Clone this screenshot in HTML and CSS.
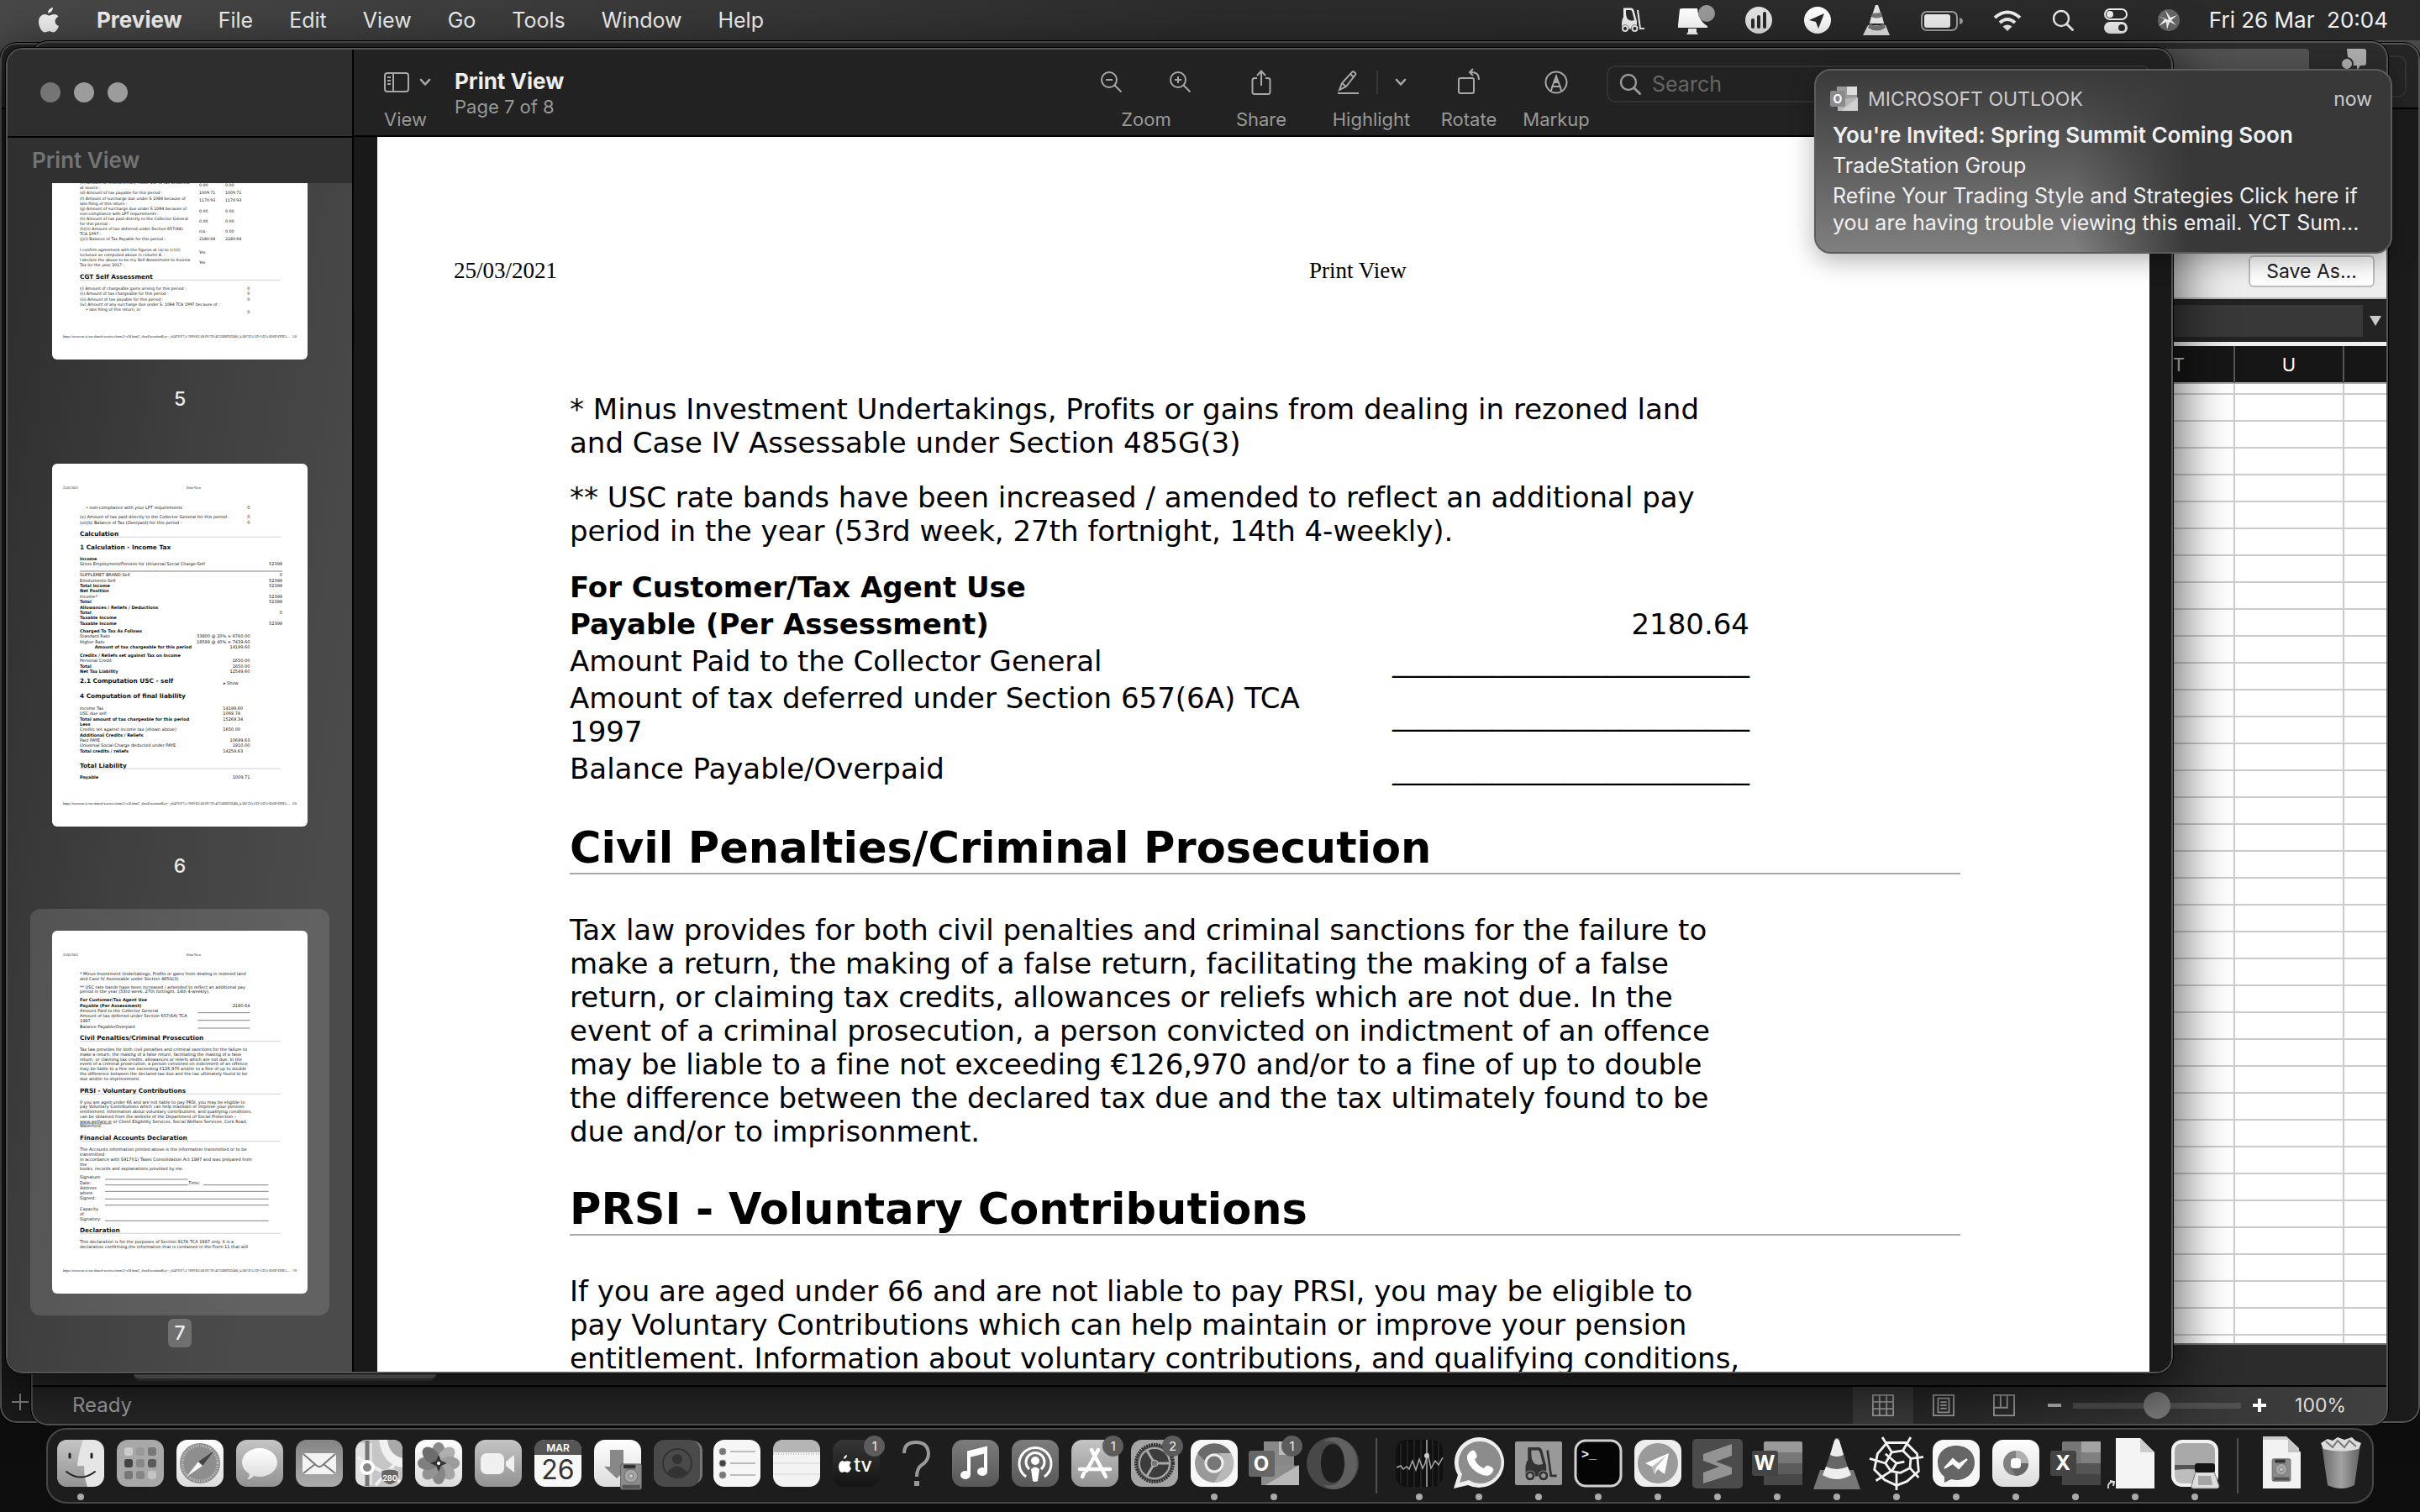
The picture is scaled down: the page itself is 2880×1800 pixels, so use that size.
FILE: index.html
```html
<!DOCTYPE html>
<html lang="en">
<head>
<meta charset="utf-8">
<title>Print View</title>
<link rel="stylesheet" href="styles.css">
</head>
<body>
<svg class="defs" aria-hidden="true">
  <defs>
    <linearGradient id="g-light" x1="0" y1="0" x2="0" y2="1"><stop offset="0" stop-color="#fff"/><stop offset="1" stop-color="#dcdcdc"/></linearGradient>
    <linearGradient id="g-soft" x1="0" y1="0" x2="0" y2="1"><stop offset="0" stop-color="#c4c4c4"/><stop offset="1" stop-color="#939393"/></linearGradient>
    <linearGradient id="g-mid" x1="0" y1="0" x2="0" y2="1"><stop offset="0" stop-color="#858585"/><stop offset="1" stop-color="#acacac"/></linearGradient>
    <linearGradient id="g-grey" x1="0" y1="0" x2="0" y2="1"><stop offset="0" stop-color="#7c7c7c"/><stop offset="1" stop-color="#585858"/></linearGradient>
    <linearGradient id="g-dark" x1="0" y1="0" x2="0" y2="1"><stop offset="0" stop-color="#363636"/><stop offset="1" stop-color="#141414"/></linearGradient>
    <linearGradient id="g-bin" x1="0" y1="0" x2="1" y2="0"><stop offset="0" stop-color="#6a6a6a"/><stop offset=".5" stop-color="#a2a2a2"/><stop offset="1" stop-color="#626262"/></linearGradient>
    <symbol id="forklift" viewBox="0 0 64 64">
      <path d="M12 3h18q5 0 7 6l7 26v18H8V38q0-8 4-13z" fill="currentColor"/>
      <path class="cut" d="M18 8h11q3 0 4 4l5 20q-12 3-16-3-5-6-4-21z"/>
      <path d="M46 8l6 44h10" fill="none" stroke="currentColor" stroke-width="4"/>
      <circle cx="16" cy="52" r="9" class="cut"/><circle cx="39" cy="52" r="9" class="cut"/>
      <circle cx="16" cy="52" r="6" class="cut" stroke="currentColor" stroke-width="4"/><circle cx="39" cy="52" r="6" class="cut" stroke="currentColor" stroke-width="4"/>
    </symbol>
    <symbol id="glass" viewBox="0 0 28 28">
      <circle cx="12" cy="12" r="9" fill="none" stroke="currentColor" stroke-width="2.4"/><path d="M18.500 18.500l7 7" stroke="currentColor" stroke-width="3" stroke-linecap="round"/>
    </symbol>
    <symbol id="chevron" viewBox="0 0 14 10"><path d="M2 2l5 5.500 5-5.500" fill="none" stroke="currentColor" stroke-width="2.600" stroke-linecap="round" stroke-linejoin="round"/></symbol>
    <symbol id="drive" viewBox="0 0 30 36">
      <rect x="1" y="1" width="28" height="34" rx="2" fill="#8b8b8b" stroke="#5a5a5a"/><rect x="5" y="2" width="16" height="5" fill="#333"/>
      <circle cx="15" cy="17" r="9" fill="#a5a5a5" stroke="#666"/><circle cx="15" cy="17" r="3" fill="#ccc" stroke="#666"/><path d="M3 29h24v5H3z" fill="#555"/>
    </symbol>
  </defs>
</svg>

<header class="menubar">
  <nav class="menus">
    <button class="menu apple" aria-label="Apple"><svg viewBox="0 0 26 32"><path d="M18 1c0 3-2.500 6.500-6 6.500C11.800 4.500 14.500 1.500 18 1zM24.500 11.500c-3 2-4.500 4-3.800 7 .4 2 2 3.600 4.300 4.500-1.200 3.500-3.800 7.500-6.500 7.500-2 0-2.700-1.200-5-1.200s-3.200 1.200-5 1.200C4.500 30.500 1 23.500 1 18c0-5.500 3.500-9 7.200-9 2.200 0 3.800 1.400 5.400 1.400 1.500 0 3.300-1.500 6-1.500 2 0 3.800 1 4.900 2.600z" fill="currentColor"/></svg></button>
    <button class="menu app-name">Preview</button>
    <button class="menu">File</button>
    <button class="menu">Edit</button>
    <button class="menu">View</button>
    <button class="menu">Go</button>
    <button class="menu">Tools</button>
    <button class="menu">Window</button>
    <button class="menu">Help</button>
  </nav>
  <div class="extras">
    <svg class="w38" viewBox="0 0 38 36"><use href="#forklift" x="2" y="2" width="34" height="32"/></svg>
    <svg class="w46" viewBox="0 0 46 36"><path d="M4 5q1-1 3-1h18c1 12 7 18 12 21v2H2V24z" fill="#fff"/><path d="M14 28h10v4l2 3H12l2-3z" fill="#fff"/><circle cx="36" cy="10" r="10" fill="#9a9a9a"/></svg>
    <svg class="w36" viewBox="0 0 36 36"><circle cx="18" cy="18" r="16" fill="#e4e4e4"/><path d="M11 18v8M18 14v12M25 10v16" stroke="#2a2a2a" stroke-width="4" stroke-linecap="round"/></svg>
    <svg class="w36" viewBox="0 0 36 36"><circle cx="18" cy="18" r="16" fill="#fff"/><path d="M26 10L8 18l8 2 3 8z" fill="#2a2a2a"/></svg>
    <svg class="w36" viewBox="0 0 36 36"><path d="M17 0h3l4 12H13z" fill="#e6e6e6"/><path d="M13 10l11-1 3 12H10z" fill="#777"/><path d="M12 14q6 3 13 0l2 8H10z" fill="#eee"/><path d="M8 24h21l5 12H2z" fill="#e8e8e8"/><path d="M10 22q8 5 17 0l2 5q-10 7-21 0z" fill="#777"/></svg>
    <svg class="w52" viewBox="0 0 52 36"><rect x="2" y="8" width="42" height="22" rx="6" fill="none" stroke="#a0a0a0" stroke-width="2"/><rect x="5" y="11" width="31" height="16" rx="3" fill="#f0f0f0"/><path d="M47 15q4 1 4 4t-4 4z" fill="#a0a0a0"/></svg>
    <svg class="w36" viewBox="0 0 36 36"><g fill="none" stroke="#f0f0f0" stroke-width="4"><path d="M3 15q15-13 30 0"/><path d="M9 21q9-8 18 0"/></g><path d="M12.500 25.500q5.500-4 11 0L18 31z" fill="#f0f0f0"/></svg>
    <svg class="w28 pale" viewBox="0 -4 28 36"><use href="#glass" width="28" height="28"/></svg>
    <svg class="w30" viewBox="0 0 30 36"><rect x="2" y="5" width="26" height="12" rx="6" fill="none" stroke="#f0f0f0" stroke-width="2"/><circle cx="8" cy="11" r="4" fill="#f0f0f0"/><rect x="1" y="20" width="28" height="14" rx="7" fill="#f0f0f0"/><circle cx="22" cy="27" r="4" fill="#2b2b2b"/></svg>
    <svg class="w28" viewBox="0 0 28 36"><circle cx="14" cy="18" r="13" fill="#666"/><path d="M14 18L10 6l6 9 8-3-7 6 6 6-8-4-3 9-1-9-9 5 7-8-7-4z" fill="#f4f4f4"/></svg>
    <time class="clock">Fri 26 Mar&nbsp; 20:04</time>
  </div>
</header>

<main class="desktop">
  <section class="window back-window" aria-label="Background window"><div class="back-bar"><div class="back-field"></div></div><span class="back-plus"></span></section>

  <section class="window sheet-window" aria-label="Spreadsheet">
    <div class="sheet-title"><span class="sheet-search">Search Sheet</span>
      <svg class="share-icon" viewBox="0 0 30 28"><path d="M7 0h20q3 0 3 3v14q0 3-3 3h-4l-4 6v-6H9z" fill="#aaa"/><circle cx="7" cy="18" r="7" fill="#aaa" stroke="#2b2b2b" stroke-width="2"/></svg></div>
    <div class="sheet-alert"><button class="save-as">Save As...</button></div>
    <div class="formula"><div class="formula-box"></div><span class="formula-arrow"></span></div>
    <div class="columns"><span>T</span><span class="current">U</span><span></span></div>
    <div class="cells"></div>
    <div class="tabs"><div class="tab"></div></div>
    <footer class="status">
      <span class="ready">Ready</span>
      <button class="view-btn on" aria-label="Normal view"><svg viewBox="0 0 28 28"><path d="M1 1h26v26H1zM9.500 1v26M18.500 1v26M1 9.500h26M1 18.500h26" /></svg></button>
      <button class="view-btn" aria-label="Page layout"><svg viewBox="0 0 28 28"><path d="M1 1h26v26H1zM7 5h14v18H7zM10 10h8M10 14h8M10 18h8"/></svg></button>
      <button class="view-btn" aria-label="Page break preview"><svg viewBox="0 0 28 28"><path d="M1 1h26v26H1zM1 17h17V1M9.500 1v16"/></svg></button>
      <button class="step minus" aria-label="Zoom out sheet"></button>
      <input class="zoom-range" type="range" min="0" max="100" value="50" aria-label="Zoom">
      <button class="step plus" aria-label="Zoom in sheet"></button>
      <span class="percent">100%</span>
    </footer>
  </section>

  <section class="window preview" aria-label="Print View">
    <aside class="sidebar">
      <div class="lights"><button class="light dim" aria-label="Close"></button><button class="light" aria-label="Minimise"></button><button class="light" aria-label="Full screen"></button></div>
      <h2 class="side-title">Print View</h2>
      <div class="thumbs">
        <a href="#p5" class="thumb cutoff"><span class="frame"><svg viewBox="0 666 912 630" class="sheet5">
          <text x="99" y="669">(c) Amount of refund/(credit) made due to tax deducted</text><text x="99" y="687">at source :</text><text x="525" y="677">0.00</text><text x="618" y="677">0.00</text>
          <text x="99" y="705">(d) Amount of tax payable for this period :</text><text x="525" y="705">1009.71</text><text x="618" y="705">1009.71</text>
          <text x="99" y="725">(f) Amount of surcharge due under S 1084 because of</text><text x="99" y="743">late filing of this return :</text><text x="525" y="733">1170.93</text><text x="618" y="733">1170.93</text>
          <text x="99" y="761">(g) Amount of surcharge due under S 1084 because of</text><text x="99" y="779">non-compliance with LPT requirements :</text><text x="525" y="770">0.00</text><text x="618" y="770">0.00</text>
          <text x="99" y="797">(h) Amount of tax paid directly to the Collector General</text><text x="99" y="815">for this period :</text><text x="525" y="806">0.00</text><text x="618" y="806">0.00</text>
          <text x="99" y="834">(h)(ii) Amount of tax deferred under Section 657(6A)</text><text x="99" y="852">TCA 1997 :</text><text x="525" y="842">n/a</text><text x="618" y="842">0.00</text>
          <text x="99" y="871">(j)(i) Balance of Tax Payable for this period :</text><text x="525" y="871">2180.64</text><text x="618" y="871">2180.64</text>
          <text x="99" y="909">I confirm agreement with the figures at (a) to (c)(ii)</text><text x="99" y="926">inclusive as computed above in column A. :</text><text x="525" y="918">Yes</text>
          <text x="99" y="945">I declare the above to be my Self Assessment to Income</text><text x="99" y="964">Tax for the year 2017 :</text><text x="525" y="954">Yes</text>
          <text class="h" x="99" y="1008">CGT Self Assessment</text><path d="M99 1012h717"/>
          <text x="99" y="1046">(i) Amount of chargeable gains arising for this period :</text><text x="697" y="1046">0</text>
          <text x="99" y="1065">(ii) Amount of tax chargeable for this period :</text><text x="697" y="1065">0</text>
          <text x="99" y="1085">(iii) Amount of tax payable for this period :</text><text x="697" y="1085">0</text>
          <text x="99" y="1105">(iv) Amount of any surcharge due under S. 1084 TCA 1997 because of :</text>
          <text x="120" y="1123">• late filing of this return, or</text><text x="697" y="1130">0</text>
          <text class="s" x="39" y="1217">https://www.ros.ie/ros-shared-services/form11-v38.html?_flowExecutionKey=_c64F91F7A-7899-B2AB-DC7D-4F25BBFED480_kABCDA11D-11DA-B56D-DDE5…</text><text class="s" x="858" y="1217">5/8</text>
        </svg></span><span class="num">5</span></a>
        <a href="#p6" class="thumb"><span class="frame"><svg viewBox="0 0 912 1296">
          <text class="s" x="39" y="89">25/03/2021</text><text class="s" x="480" y="89">Print View</text>
          <text x="120" y="161">• non-compliance with your LPT requirements</text><text x="697" y="161">0</text>
          <text x="99" y="196">(v) Amount of tax paid directly to the Collector General for this period :</text><text x="697" y="196">0</text>
          <text x="99" y="216">(vi)(b) Balance of Tax (Overpaid) for this period :</text><text x="697" y="216">0</text>
          <text class="h" x="99" y="259">Calculation</text><path d="M99 262h717"/>
          <text class="h" x="99" y="306">1 Calculation - Income Tax</text>
          <text class="b" x="99" y="344">Income</text><text x="99" y="364">Gross Employment/Pension for Universal Social Charge-Self</text><text class="e" x="822" y="364">52399</text><path class="k" d="M99 384h723"/>
          <text x="99" y="403">SUPPLEMET BRAND-Self</text><text class="e" x="822" y="403">0</text>
          <text x="99" y="423">Emoluments-Self</text><text class="e" x="822" y="423">52399</text>
          <text class="b" x="99" y="440">Total Income</text><text class="e" x="822" y="440">52399</text>
          <text class="b" x="99" y="460">Net Position</text><text x="99" y="479">Income*</text><text class="e" x="822" y="479">52399</text>
          <text class="b" x="99" y="499">Total</text><text class="e" x="822" y="499">52399</text>
          <text class="b" x="99" y="518">Allowances / Reliefs / Deductions</text><text class="b" x="99" y="536">Total</text><text class="e" x="822" y="536">0</text>
          <text class="b" x="99" y="556">Taxable Income</text><text class="b" x="99" y="576">Taxable Income</text><text class="e" x="822" y="576">52399</text>
          <text class="b" x="99" y="604">Charged To Tax As Follows</text>
          <text x="99" y="622">Standard Rate</text><text class="e" x="706" y="622">33800 @ 20% = 6760.00</text>
          <text x="99" y="642">Higher Rate</text><text class="e" x="706" y="642">18599 @ 40% = 7439.60</text>
          <text class="b" x="152" y="660">Amount of tax chargeable for this period</text><text class="e" x="706" y="660">14199.60</text>
          <text class="b" x="99" y="690">Credits / Reliefs set against Tax on Income</text>
          <text x="99" y="709">Personal Credit</text><text class="e" x="706" y="709">1650.00</text>
          <text class="b" x="99" y="729">Total</text><text class="e" x="706" y="729">1650.00</text>
          <text class="b" x="99" y="747">Net Tax Liability</text><text class="e" x="706" y="747">12549.60</text>
          <text class="h" x="99" y="782">2.1 Computation USC - self</text><text x="612" y="788">▸ Show</text>
          <text class="h" x="99" y="838">4 Computation of final liability</text>
          <text x="99" y="879">Income Tax</text><text x="610" y="879">14199.60</text>
          <text x="99" y="897">USC due self</text><text x="610" y="897">1069.74</text>
          <text class="b" x="99" y="917">Total amount of tax chargeable for this period</text><text x="610" y="917">15269.34</text>
          <text class="b" x="99" y="935">Less</text><text x="99" y="955">Credits set against income tax (shown above)</text><text x="610" y="955">1650.00</text>
          <text class="b" x="99" y="974">Additional Credits / Reliefs</text>
          <text x="99" y="992">Paid PAYE</text><text class="e" x="706" y="992">10699.63</text>
          <text x="99" y="1012">Universal Social Charge deducted under PAYE</text><text class="e" x="706" y="1012">1910.00</text>
          <text class="b" x="99" y="1032">Total credits / reliefs</text><text x="610" y="1032">14259.63</text>
          <text class="h" x="99" y="1086">Total Liability</text><path d="M99 1089h717"/>
          <text class="b" x="99" y="1125">Payable</text><text class="e" x="706" y="1125">1009.71</text>
          <text class="s" x="39" y="1217">https://www.ros.ie/ros-shared-services/form11-v38.html?_flowExecutionKey=_c64F91F7A-7899-B2AB-DC7D-4F25BBFED480_kABCDA11D-11DA-B56D-DDE5…</text><text class="s" x="858" y="1217">6/8</text>
        </svg></span><span class="num">6</span></a>
        <a href="#p7" class="thumb selected"><span class="frame"><svg viewBox="0 0 912 1296">
          <text class="s" x="39" y="89">25/03/2021</text><text class="s" x="480" y="89">Print View</text>
          <text x="99" y="160">* Minus Investment Undertakings, Profits or gains from dealing in rezoned land</text><text x="99" y="178">and Case IV Assessable under Section 485G(3)</text>
          <text x="99" y="206">** USC rate bands have been increased / amended to reflect an additional pay</text><text x="99" y="223">period in the year (53rd week, 27th fortnight, 14th 4-weekly).</text>
          <text class="b" x="99" y="252">For Customer/Tax Agent Use</text><text class="b" x="99" y="272">Payable (Per Assessment)</text><text class="e" x="706" y="272">2180.64</text>
          <text x="99" y="291">Amount Paid to the Collector General</text><text x="99" y="309">Amount of tax deferred under Section 657(6A) TCA</text><text x="99" y="327">1997</text><text x="99" y="347">Balance Payable/Overpaid</text>
          <path class="k" d="M520 293h186M520 320h186M520 348h186"/>
          <text class="h" x="99" y="390">Civil Penalties/Criminal Prosecution</text><path d="M99 395h717"/>
          <text x="99" y="429">Tax law provides for both civil penalties and criminal sanctions for the failure to</text><text x="99" y="447">make a return, the making of a false return, facilitating the making of a false</text><text x="99" y="464">return, or claiming tax credits, allowances or reliefs which are not due. In the</text><text x="99" y="481">event of a criminal prosecution, a person convicted on indictment of an offence</text><text x="99" y="498">may be liable to a fine not exceeding €126,970 and/or to a fine of up to double</text><text x="99" y="516">the difference between the declared tax due and the tax ultimately found to be</text><text x="99" y="534">due and/or to imprisonment.</text>
          <text class="h" x="99" y="578">PRSI - Voluntary Contributions</text><path d="M99 583h717"/>
          <text x="99" y="617">If you are aged under 66 and are not liable to pay PRSI, you may be eligible to</text><text x="99" y="634">pay Voluntary Contributions which can help maintain or improve your pension</text><text x="99" y="651">entitlement. Information about voluntary contributions, and qualifying conditions,</text><text x="99" y="669">can be obtained from the website of the Department of Social Protection –</text><text x="99" y="686"><tspan text-decoration="underline">www.welfare.ie</tspan> or Client Eligibility Services, Social Welfare Services, Cork Road,</text><text x="99" y="703">Waterford.</text>
          <text class="h" x="99" y="747">Financial Accounts Declaration</text><path d="M99 752h717"/>
          <text x="99" y="787">The Accounts information printed above is the information transmitted or to be</text><text x="99" y="805">transmitted</text><text x="99" y="822">in accordance with S917f(1) Taxes Consolidation Act 1997 and was prepared from</text><text x="99" y="839">the</text><text x="99" y="856">books, records and explanations provided by me.</text>
          <text x="99" y="885">Signature:</text><text x="99" y="905">Date:</text><text x="487" y="905">Time:</text><text x="99" y="924">Address</text><text x="99" y="943">where</text><text x="99" y="960">Signed:</text><text x="99" y="999">Capacity</text><text x="99" y="1016">of</text><text x="99" y="1034">Signatory:</text>
          <path class="k" d="M189 888h296M189 908h296M540 908h232M189 931h584M189 958h584M189 980h584M189 1036h584"/>
          <text class="h" x="99" y="1077">Declaration</text><path d="M99 1081h717"/>
          <text x="99" y="1117">This declaration is for the purposes of Section 917K TCA 1997 only. It is a</text><text x="99" y="1134">declaration confirming the information that is contained in the Form 11 that will</text>
          <text class="s" x="39" y="1217">https://www.ros.ie/ros-shared-services/form11-v38.html?_flowExecutionKey=_c64F91F7A-7899-B2AB-DC7D-4F25BBFED480_kABCDA11D-11DA-B56D-DDE5…</text><text class="s" x="858" y="1217">7/8</text>
        </svg></span><span class="num">7</span></a>
      </div>
    </aside>

    <div class="content">
      <div class="toolbar">
        <button class="tool view-tool"><span class="glyphs"><svg class="w30" viewBox="0 0 30 24"><rect x="1" y="1" width="28" height="22" rx="3"/><path d="M11 1v22M4 6h4M4 10h4M4 14h4"/></svg><svg class="w14" viewBox="0 0 14 10"><use href="#chevron"/></svg></span>View</button>
        <div class="doc-title"><h1>Print View</h1><p>Page 7 of 8</p></div>
        <div class="tool zoom-tool"><span class="glyphs"><button aria-label="Zoom out"><svg class="w28" viewBox="0 0 28 28"><circle cx="11" cy="11" r="9"/><path d="M7 11h8M17.500 17.500l8 8"/></svg></button><button aria-label="Zoom in"><svg class="w28" viewBox="0 0 28 28"><circle cx="11" cy="11" r="9"/><path d="M7 11h8M11 7v8M17.500 17.500l8 8"/></svg></button></span>Zoom</div>
        <button class="tool share-tool"><span class="glyphs"><svg class="w28" viewBox="0 0 28 32"><path d="M9 11H6q-2.500 0-2.500 2.500v14Q3.500 30 6 30h16q2.500 0 2.500-2.500v-14Q24.500 11 22 11h-3M14 20V3M9 8l5-5.500L19 8"/></svg></span>Share</button>
        <div class="tool mark-tool"><span class="glyphs"><button aria-label="Highlight text"><svg class="w28" viewBox="0 0 28 32"><path d="M2 29h25M4 25l3-8L19 4q1-1.500 3 0t1 3L12 21zM17 6l4 4M7 17l5 4"/></svg></button><i></i><button aria-label="Highlight colour"><svg class="w14" viewBox="0 0 14 10"><use href="#chevron"/></svg></button></span>Highlight</div>
        <button class="tool rotate-tool"><span class="glyphs"><svg class="w28" viewBox="0 0 28 32"><rect x="2" y="11" width="18" height="18" rx="2"/><path d="M16 4q10-1 10 9M19 0l-4 4 4 4"/></svg></span>Rotate</button>
        <button class="tool markup-tool"><span class="glyphs"><svg class="w28" viewBox="0 0 28 28"><circle cx="14" cy="14" r="12.500"/><path d="M8 24l1-4 5-13 5 13 1 4M9.500 19h9"/><path d="M14 7l2.500 7h-5z" fill="currentColor"/></svg></span>Markup</button>
        <label class="search"><svg class="w28" viewBox="0 0 28 28"><use href="#glass"/></svg><input type="search" placeholder="Search" aria-label="Search"></label>
      </div>
      <div class="viewer">
        <article class="page">
          <div class="page-head"><span>25/03/2021</span><span>Print View</span></div>
          <p>* Minus Investment Undertakings, Profits or gains from dealing in rezoned land<br>and Case IV Assessable under Section 485G(3)</p>
          <p>** USC rate bands have been increased / amended to reflect an additional pay<br>period in the year (53rd week, 27th fortnight, 14th 4-weekly).</p>
          <table>
            <tr><th>For Customer/Tax Agent Use</th><td></td></tr>
            <tr><th>Payable (Per Assessment)</th><td>2180.64</td></tr>
            <tr><td>Amount Paid to the Collector General</td><td>_________________________</td></tr>
            <tr><td>Amount of tax deferred under Section 657(6A) TCA<br>1997</td><td>_________________________</td></tr>
            <tr><td>Balance Payable/Overpaid</td><td>_________________________</td></tr>
          </table>
          <h3>Civil Penalties/Criminal Prosecution</h3>
          <p>Tax law provides for both civil penalties and criminal sanctions for the failure to<br>make a return, the making of a false return, facilitating the making of a false<br>return, or claiming tax credits, allowances or reliefs which are not due. In the<br>event of a criminal prosecution, a person convicted on indictment of an offence<br>may be liable to a fine not exceeding €126,970 and/or to a fine of up to double<br>the difference between the declared tax due and the tax ultimately found to be<br>due and/or to imprisonment.</p>
          <h3>PRSI - Voluntary Contributions</h3>
          <p>If you are aged under 66 and are not liable to pay PRSI, you may be eligible to<br>pay Voluntary Contributions which can help maintain or improve your pension<br>entitlement. Information about voluntary contributions, and qualifying conditions,</p>
        </article>
      </div>
    </div>
  </section>
</main>

<aside class="notice">
  <div class="notice-head">
    <svg viewBox="0 0 36 32"><path d="M9 1h24v18H9z" fill="#999"/><path d="M21 1h12v10H21z" fill="#ddd"/><path d="M10 16l24-2v16H10z" fill="#b5b5b5"/><path d="M34 14v16H14z" fill="#cfcfcf"/><rect x="1" y="6" width="18" height="19" rx="2" fill="#8a8a8a"/><text x="10" y="21" class="tile-letter small">O</text></svg>
    <span>MICROSOFT OUTLOOK</span><time>now</time>
  </div>
  <strong>You're Invited: Spring Summit Coming Soon</strong>
  <p class="from">TradeStation Group</p>
  <p>Refine Your Trading Style and Strategies Click here if<br>you are having trouble viewing this email. YCT Sum...</p>
</aside>

<nav class="dock" aria-label="Dock">
  <button class="app run" aria-label="Finder"><svg viewBox="0 0 64 64"><rect x="4" y="4" width="56" height="56" rx="13" fill="#e6e6e6"/><path d="M17 4h18q-6 16-7 31h8q0 14 4 25H17Q4 60 4 47V17Q4 4 17 4z" fill="url(#g-soft)"/><path d="M19 21v4M45 21v4" stroke="#222" stroke-width="3" stroke-linecap="round"/><path d="M15 42q17 13 34 0" fill="none" stroke="#222" stroke-width="2" stroke-linecap="round"/></svg></button>
  <button class="app" aria-label="Launchpad"><svg viewBox="0 0 64 64"><rect x="4" y="4" width="56" height="56" rx="13" fill="#a8a8a8"/><g><rect x="13" y="13" width="10" height="10" rx="3" fill="#ccc"/><rect x="27" y="13" width="10" height="10" rx="3" fill="#999"/><rect x="41" y="13" width="10" height="10" rx="3" fill="#777"/><rect x="13" y="27" width="10" height="10" rx="3" fill="#444"/><rect x="27" y="27" width="10" height="10" rx="3" fill="#888"/><rect x="41" y="27" width="10" height="10" rx="3" fill="#5a5a5a"/><rect x="13" y="41" width="10" height="10" rx="3" fill="#777"/><rect x="27" y="41" width="10" height="10" rx="3" fill="#858585"/><rect x="41" y="41" width="10" height="10" rx="3" fill="#c4c4c4"/></g></svg></button>
  <button class="app" aria-label="Safari"><svg viewBox="0 0 64 64"><rect x="4" y="4" width="56" height="56" rx="13" fill="url(#g-light)"/><circle cx="32" cy="32" r="24" fill="#8e8e8e"/><circle cx="32" cy="32" r="21" fill="none" stroke="#ccc" stroke-width="3" stroke-dasharray="1 2"/><path d="M49 17L35 35l-5-5z" fill="#444"/><path d="M16 48l14-18 5 5z" fill="#f5f5f5"/></svg></button>
  <button class="app" aria-label="Messages"><svg viewBox="0 0 64 64"><rect x="4" y="4" width="56" height="56" rx="13" fill="url(#g-soft)"/><path d="M32 14c12 0 21 8 21 17s-9 17-21 17q-4 0-7-1-3 4-8 4 3-3 3-6-9-6-9-14c0-9 9-17 21-17z" fill="url(#g-light)"/></svg></button>
  <button class="app" aria-label="Mail"><svg viewBox="0 0 64 64"><rect x="4" y="4" width="56" height="56" rx="13" fill="url(#g-mid)"/><rect x="12" y="20" width="40" height="25" rx="3" fill="#f3f3f3"/><path d="M13 21l16 14q3 2 6 0l16-14M13 44l14-11M51 44L37 33" fill="none" stroke="#777" stroke-width="2"/></svg></button>
  <button class="app" aria-label="Maps"><svg viewBox="0 0 64 64"><rect x="4" y="4" width="56" height="56" rx="13" fill="#c6c6c6"/><path d="M32 4h15q13 0 13 13v20Q36 34 32 4z" fill="#f1f1f1"/><path d="M42 4h6q12 0 12 12v10Q44 22 42 4z" fill="#a9a9a9"/><path d="M8 8h16v50h-8Q4 60 4 47V16z" fill="#e2e2e2"/><path d="M18 5v54" stroke="#777" stroke-width="5"/><path d="M6 25l51 29M28 58L50 34" stroke="#eee" stroke-width="4"/><circle cx="18" cy="37" r="7" fill="#888" stroke="#fff" stroke-width="4"/><path d="M35 41q10-4 20 0 3 14-10 17-13-3-10-17z" fill="#666" stroke="#ddd"/><text x="45" y="53" class="shield">280</text></svg></button>
  <button class="app" aria-label="Photos"><svg viewBox="0 0 64 64"><rect x="4" y="4" width="56" height="56" rx="13" fill="url(#g-light)"/><g opacity=".85"><ellipse cx="32" cy="19" rx="8" ry="12" fill="#777"/><ellipse cx="32" cy="19" rx="8" ry="12" fill="#a3a3a3" transform="rotate(45 32 32)"/><ellipse cx="32" cy="19" rx="8" ry="12" fill="#8e8e8e" transform="rotate(90 32 32)"/><ellipse cx="32" cy="19" rx="8" ry="12" fill="#999" transform="rotate(135 32 32)"/><ellipse cx="32" cy="19" rx="8" ry="12" fill="#777" transform="rotate(180 32 32)"/><ellipse cx="32" cy="19" rx="8" ry="12" fill="#858585" transform="rotate(225 32 32)"/><ellipse cx="32" cy="19" rx="8" ry="12" fill="#6d6d6d" transform="rotate(270 32 32)"/><ellipse cx="32" cy="19" rx="8" ry="12" fill="#555" transform="rotate(315 32 32)"/></g><path d="M32 22l3 7 7 3-7 3-3 7-3-7-7-3 7-3z" fill="#333"/><circle cx="32" cy="32" r="2" fill="#fff"/></svg></button>
  <button class="app" aria-label="FaceTime"><svg viewBox="0 0 64 64"><rect x="4" y="4" width="56" height="56" rx="13" fill="url(#g-soft)"/><rect x="11" y="20" width="28" height="25" rx="7" fill="#f0f0f0"/><path d="M41 30l10-8v21l-10-8z" fill="#f0f0f0"/></svg></button>
  <button class="app" aria-label="Calendar"><svg viewBox="0 0 64 64"><rect x="4" y="4" width="56" height="56" rx="13" fill="#f8f8f8"/><path d="M4 22v-5Q4 4 17 4h30q13 0 13 13v5z" fill="#555"/><text x="32" y="18" class="cal-month">MAR</text><text x="32" y="51" class="cal-day">26</text></svg></button>
  <button class="app" aria-label="Installer"><svg viewBox="0 0 64 64"><rect x="4" y="4" width="56" height="56" rx="13" fill="url(#g-light)"/><path d="M23 16h16v20h7L31 50 16 36h7z" fill="#888"/><use href="#drive" x="34" y="32" width="28" height="32"/></svg></button>
  <button class="app" aria-label="Contacts"><svg viewBox="0 0 64 64"><rect x="8" y="5" width="54" height="52" rx="12" fill="#777"/><rect x="4" y="4" width="55" height="56" rx="13" fill="#4a4a4a"/><circle cx="32" cy="32" r="17" fill="none" stroke="#333" stroke-width="2"/><circle cx="32" cy="27" r="6" fill="#333"/><path d="M20 43q12-15 24 0-12 10-24 0z" fill="#333"/></svg></button>
  <button class="app" aria-label="Reminders"><svg viewBox="0 0 64 64"><rect x="4" y="4" width="56" height="56" rx="13" fill="#f6f6f6"/><g fill="#777" stroke="#999" stroke-width="1"><circle cx="15" cy="18" r="4"/><circle cx="15" cy="32" r="4" fill="#444"/><circle cx="15" cy="46" r="4"/></g><path d="M24 18h30M24 32h30M24 46h30" stroke="#bbb" stroke-width="2"/></svg></button>
  <button class="app" aria-label="Notes"><svg viewBox="0 0 64 64"><rect x="4" y="4" width="56" height="56" rx="13" fill="#f3f3f3"/><path d="M4 19v-2Q4 4 17 4h30q13 0 13 13v2z" fill="#b5b5b5"/><path d="M4 32h56M4 45h56" stroke="#d5d5d5"/><path d="M4 21h56" stroke="#999" stroke-dasharray="1 2"/></svg></button>
  <button class="app" aria-label="TV"><svg viewBox="0 0 64 64"><rect x="4" y="4" width="56" height="56" rx="13" fill="url(#g-dark)"/><path d="M21 22q0 4-4 5 0-4 4-5zM26 31q-4 3 0 7-2 5-5 5l-3-1-3 1q-4-1-4-8 1-6 5-6l2 1q5-2 8 1z" fill="#fff"/><text x="40" y="42" class="tv">tv</text></svg><b class="badge">1</b></button>
  <button class="app" aria-label="Missing application"><svg viewBox="0 0 64 64"><path d="M18 20Q18 7 32 7t15 13q0 9-8 14-6 4-6 14" fill="none" stroke="#999" stroke-width="4"/><rect x="30" y="53" width="6" height="6" fill="#999"/></svg></button>
  <button class="app" aria-label="Music"><svg viewBox="0 0 64 64"><rect x="4" y="4" width="56" height="56" rx="13" fill="url(#g-grey)"/><path d="M24 45V19l20-5v27M24 23l20-5" fill="none" stroke="#fff" stroke-width="4"/><ellipse cx="20" cy="46" rx="6" ry="5" fill="#fff"/><ellipse cx="40" cy="42" rx="6" ry="5" fill="#fff"/></svg></button>
  <button class="app" aria-label="Podcasts"><svg viewBox="0 0 64 64"><rect x="4" y="4" width="56" height="56" rx="13" fill="url(#g-grey)"/><g fill="none" stroke="#fff" stroke-width="3"><path d="M21 48a19 19 0 1 1 22 0"/><path d="M25 39a11 11 0 1 1 14 0"/></g><circle cx="32" cy="29" r="5" fill="#fff"/><path d="M27 39q5-5 10 0l-2 14q-3 2-6 0z" fill="#fff"/></svg></button>
  <button class="app" aria-label="App Store"><svg viewBox="0 0 64 64"><rect x="4" y="4" width="56" height="56" rx="13" fill="url(#g-soft)"/><path d="M28 16l17 32M36 16L22 41M14 39h36M19 44l-2 4" fill="none" stroke="#fff" stroke-width="4.500" stroke-linecap="round"/></svg><b class="badge">1</b></button>
  <button class="app" aria-label="System Preferences"><svg viewBox="0 0 64 64"><rect x="4" y="4" width="56" height="56" rx="13" fill="#a5a5a5"/><circle cx="32" cy="32" r="22" fill="#666" stroke="#2c2c2c" stroke-width="4" stroke-dasharray="2 1"/><circle cx="32" cy="32" r="18" fill="#3c3c3c" stroke="#aaa" stroke-width="2"/><path d="M32 32h17M32 32l-9-15M32 32l-9 15" stroke="#aaa" stroke-width="3"/><circle cx="32" cy="32" r="4" fill="#777" stroke="#bbb"/></svg><b class="badge">2</b></button>
  <button class="app run" aria-label="Chrome"><svg viewBox="0 0 64 64"><rect x="4" y="4" width="56" height="56" rx="13" fill="#f7f7f7"/><circle cx="32" cy="32" r="23" fill="#999"/><path d="M12 20a23 23 0 0 1 40 0H32q-9 2-11 9z" fill="#6b6b6b"/><path d="M52 20a23 23 0 0 1-20 35l10-16q4-9-4-19z" fill="#b8b8b8"/><circle cx="32" cy="32" r="10" fill="#777" stroke="#eee" stroke-width="3"/></svg></button>
  <button class="app run" aria-label="Outlook"><svg viewBox="0 0 64 64"><path d="M20 6h36v34H20z" fill="#888"/><path d="M38 6h18v16H38z" fill="#bbb"/><path d="M17 32l45 3v23H17z" fill="#8c8c8c"/><path d="M62 34v24H22z" fill="#b8b8b8"/><rect x="2" y="17" width="31" height="31" rx="3" fill="#666"/><text x="17" y="41" class="tile-letter">O</text></svg><b class="badge">1</b></button>
  <button class="app" aria-label="Opera"><svg viewBox="0 0 64 64"><path d="M32 1a31 31 0 1 0 .1 0zM32 9c9 0 14 11 14 23s-5 23-14 23-14-11-14-23S23 9 32 9z" fill="#484848" fill-rule="evenodd"/><path d="M34 1c36 2 36 60 0 62q-8 0-13-6c34 12 34-62 0-50q5-6 13-6z" fill="#606060"/></svg></button>
  <i class="sep"></i>
  <button class="app run" aria-label="Activity"><svg viewBox="0 0 64 64"><rect x="4" y="4" width="56" height="56" rx="13" fill="#101010"/><path d="M10 8v48M18 5v54M26 4v56M34 4v56M48 4v56M55 7v50" stroke="#333"/><path d="M41 4v56" stroke="#888" stroke-width="2"/><path d="M5 37l5-2 3 4 4-3 3 3 4-10 4 11 4-13 4 11 3-6 3-12 4 18 5-9 4 5 5-9" fill="none" stroke="#aaa" stroke-width="1.500"/><circle cx="41" cy="23" r="3" fill="#ccc"/></svg></button>
  <button class="app run" aria-label="WhatsApp"><svg viewBox="0 0 64 64"><path d="M33 1a30 30 0 1 1-14 57L2 62l5-16A30 30 0 0 1 33 1z" fill="#eee"/><path d="M33 6a25 25 0 1 1-13 46L9 55l3-10A25 25 0 0 1 33 6z" fill="#8c8c8c"/><path d="M23 17q4-2 6 4 2 4-2 6 3 8 11 11 3-5 6-3 7 3 5 6-4 9-15 4Q21 39 18 27q-1-6 5-10z" fill="#fff"/></svg></button>
  <button class="app run on-grey" aria-label="ForkLift"><svg viewBox="0 0 64 64"><rect x="4" y="6" width="56" height="52" rx="2" fill="#999"/><use href="#forklift" x="11" y="11" width="44" height="44"/></svg></button>
  <button class="app run" aria-label="Terminal"><svg viewBox="0 0 64 64"><rect x="5" y="5" width="54" height="54" rx="12" fill="#050505" stroke="#d0d0d0" stroke-width="3"/><text x="12" y="26" class="prompt">&gt;_</text></svg></button>
  <button class="app run" aria-label="Telegram"><svg viewBox="0 0 64 64"><rect x="4" y="4" width="56" height="56" rx="13" fill="#eee"/><circle cx="32" cy="32" r="24" fill="#9a9a9a"/><path d="M45 20L17 32l8 4 3 9 4-6 8 6z" fill="#fff"/><path d="M25 36l17-13-12 14-2 8z" fill="#bbb"/></svg></button>
  <button class="app run" aria-label="Sublime Text"><svg viewBox="0 0 64 64"><rect x="2" y="3" width="60" height="59" rx="5" fill="#4b4b4b"/><path d="M49 9v14L30 30l19 7v8L15 56V43l19-7-19-7v-8z" fill="#939393"/></svg></button>
  <button class="app run" aria-label="Word"><svg viewBox="0 0 64 64"><rect x="16" y="6" width="46" height="52" rx="2" fill="#999"/><path d="M16 19h46v13H16z" fill="#777"/><path d="M16 32h46v13H16z" fill="#5c5c5c"/><path d="M16 45h46v13H16z" fill="#484848"/><rect x="2" y="17" width="31" height="30" rx="3" fill="#444"/><text x="17" y="40" class="tile-letter">W</text></svg></button>
  <button class="app run" aria-label="VLC"><svg viewBox="0 0 64 64"><path d="M12 40h40l8 23H4z" fill="#777"/><path d="M30 2h4l14 44q-16 12-32 0z" fill="#666"/><path d="M19 36q13 6 26 0l4 10q-17 10-34 0z" fill="#eee"/><path d="M29 5q3-4 6 0l5 17q-8 4-16 0z" fill="#eee"/></svg></button>
  <button class="app run" aria-label="Spider"><svg viewBox="-2 -2 68 68"><g fill="none" stroke="#f2f2f2" stroke-width="3"><path d="M20 6h24l14 14 2 22-15 13-13 5-15-7L4 40l4-20z"/><path d="M26 18l14-2 10 10-1 12-12 6-12-2-7-10z"/><path d="M14-1l12 19M50-1L40 16M66 24L50 26M60 50L49 38M32 66V44M6 54l19-12M-2 26l20 6M18 20l14 12 10-2M32 32l-6 10"/></g></svg></button>
  <button class="app run" aria-label="Messenger"><svg viewBox="0 0 64 64"><rect x="4" y="4" width="56" height="56" rx="13" fill="#f7f7f7"/><path d="M32 11c14 0 22 9 22 20S46 52 32 52l-6-1-8 4v-7q-8-6-8-17c0-11 8-20 22-20z" fill="#666"/><path d="M18 38l10-11 7 6 10-6-10 11-7-6z" fill="#fff" stroke="#fff" stroke-width="2"/></svg></button>
  <button class="app run" aria-label="Chat"><svg viewBox="0 0 64 64"><rect x="4" y="4" width="56" height="56" rx="13" fill="url(#g-light)"/><circle cx="32" cy="32" r="15" fill="#808080"/><path d="M32 17a15 15 0 0 1 15 15h-9l-6-6z" fill="#b0b0b0"/><path d="M47 32a15 15 0 0 1-15 15l-6-9h6l6-6z" fill="#666"/><rect x="26" y="26" width="12" height="12" rx="4" fill="#fff"/></svg></button>
  <button class="app run" aria-label="Excel"><svg viewBox="0 0 64 64"><rect x="16" y="6" width="46" height="52" rx="2" fill="#777"/><path d="M39 6h23v13H39z" fill="#a3a3a3"/><path d="M39 19h23v13H39z" fill="#808080"/><path d="M16 32h46v13H16z" fill="#555"/><path d="M16 45h46v13H16z" fill="#444"/><rect x="2" y="17" width="31" height="30" rx="3" fill="#444"/><text x="17" y="40" class="tile-letter">X</text></svg></button>
  <button class="app run" aria-label="Document"><svg viewBox="0 0 64 64"><path d="M9 2h29l17 17v43H9z" fill="#f4f4f4"/><path d="M38 2v17h17z" fill="#ccc"/><path d="M0 62q-1-8 6-8M2 53l5 1-1 5" fill="none" stroke="#ddd" stroke-width="2"/></svg></button>
  <button class="app run" aria-label="Preview"><svg viewBox="0 0 64 64"><rect x="4" y="4" width="56" height="56" rx="13" fill="#f1f1f1"/><path d="M8 34V18q0-10 10-10h28q10 0 10 10v16z" fill="#a9a9a9"/><path d="M8 34h48v8H8z" fill="#555"/><path d="M8 40q20-3 48 2v4q0 10-10 10H18Q8 56 8 46z" fill="#bdbdbd"/><path d="M33 42h22l6 17q0 3-3 3H30q-3 0-2-3z" fill="#ddd" stroke="#777"/><rect x="32" y="32" width="24" height="11" rx="3" fill="#151515"/><path d="M36 47h15l2 11H36z" fill="#a5a5a5"/></svg></button>
  <i class="sep"></i>
  <button class="app" aria-label="Downloads"><svg viewBox="0 0 64 64"><path d="M10 0h28l15 14v46H10z" fill="#ccc"/><path d="M10 4h30l15 15v43H10z" fill="#f2f2f2"/><path d="M40 4v15h15z" fill="#c5c5c5"/><use href="#drive" x="18" y="26" width="28" height="28"/></svg></button>
  <button class="app" aria-label="Bin"><svg viewBox="0 0 64 64"><path d="M9 10h46l-7 48q-16 8-32 0z" fill="url(#g-bin)"/><path d="M8 8l8-5 6 2 6-4 8 3 9-3 4 4 7 3-3 7q-20 5-42 0z" fill="#ddd"/><path d="M14 6l8 7 6-8 8 8 6-8 8 7" fill="none" stroke="#777" stroke-width="2"/></svg></button>
</nav>
</body>
</html>
```
FILE: styles.css
```css
* { box-sizing: border-box; }
html, body { margin: 0; height: 100%; }
body {
  --cut: #2b2b2b;
  position: relative;
  overflow: hidden;
  background: linear-gradient(#5a5a5a, #2a2a2a 8%, #0a0a0a 60%, #0e0e0e);
  color: #e8e8e8;
  font: 26px/32px Inter, "Liberation Sans", sans-serif;
}
h1, h2, h3, p { margin: 0; }
button { margin: 0; padding: 0; border: 0; background: none; color: inherit; font: inherit; }
svg { display: block; flex: none; overflow: visible; }
.defs { position: absolute; width: 0; height: 0; }
.cut { fill: var(--cut); }
.w14 { width: 14px; } .w28 { width: 28px; } .w30 { width: 30px; } .w36 { width: 36px; }
.w38 { width: 38px; } .w46 { width: 46px; } .w52 { width: 52px; }
.pale { color: #f0f0f0; }

/* menu bar */
.menubar {
  display: flex;
  justify-content: space-between;
  height: 48px;
  padding: 0 38px 0 44px;
  background: linear-gradient(90deg, #484848, #2c2c2c 50%, #2a2a2a);
  color: #f0f0f0;
  font-size: 25px;
}
.menus, .extras { display: flex; align-items: center; }
.menus { gap: 43px; }
.extras { gap: 34px; }
.apple svg { width: 28px; height: 32px; }
.app-name { font-size: 26px; font-weight: 700; }
.clock { font-size: 26px; white-space: nowrap; }

/* windows */
.window { position: absolute; overflow: hidden; border: 2px solid #555; border-radius: 20px; outline: 1px solid #000; }
.back-window { inset: 51px 0 106px 0; background: #1b1b1b; }
.back-bar { height: 77px; padding: 13px 14px 0; border-bottom: 2px solid #000; background: #242424; }
.back-field { height: 50px; border: 2px solid #333; border-radius: 10px; }
.back-plus { position: absolute; left: 12px; bottom: 13px; width: 20px; height: 20px; background: linear-gradient(#888, #888) center / 20px 2px no-repeat, linear-gradient(#888, #888) center / 2px 20px no-repeat; }

.sheet-window { display: flex; flex-direction: column; inset: 49px 38px 103px 37px; background: #2b2b2b; }
.sheet-title { display: flex; justify-content: flex-end; gap: 38px; height: 125px; padding: 7px 24px 0; }
.sheet-search { width: 360px; height: 44px; padding: 2px 0 0 50px; border-radius: 4px; background: #515151; color: #8a8a8a; font-size: 23px; }
.share-icon { width: 30px; height: 28px; }
.sheet-alert { display: flex; justify-content: flex-end; height: 180px; padding: 128px 14px 0; border-bottom: 2px solid #bbb; background: #ededed; }
.save-as { width: 150px; height: 38px; border: 2px solid #bdbdbd; border-radius: 6px; background: #fff; color: #222; font-size: 23px; }
.formula { display: flex; align-items: center; gap: 8px; height: 51px; padding: 0 6px 0 400px; background: #232323; }
.formula-box { flex: 1; height: 38px; background: #383838; }
.formula-arrow { border: 7px solid transparent; border-top: 12px solid #c8c8c8; border-bottom: 0; }
.columns { display: grid; grid-template-columns: 1fr 130px 52px; height: 50px; border-top: 5px solid #eee; border-bottom: 2px solid #aaa; background: #161616; color: #ccc; font-size: 22px; line-height: 44px; text-align: center; }
.columns span { border-left: 2px solid #555; }
.columns span:first-child { padding-right: 58px; text-align: right; }
.columns .current { color: #fff; }
.cells {
  flex: 1;
  border-bottom: 2px solid #777;
  background:
    linear-gradient(#ccc, #ccc) right 50px top / 2px 100% no-repeat,
    linear-gradient(#ccc, #ccc) right 180px top / 2px 100% no-repeat,
    repeating-linear-gradient(#fff 0 11px, #ccc 11px 13px, #fff 13px 32px);
}
.tabs { height: 50px; padding-left: 120px; border-bottom: 2px solid #000; background: #2c2c2c; }
.tab { width: 360px; height: 43px; border-bottom: 3px solid #444; border-radius: 0 0 8px 8px; background: #7a7a7a; }
.status { display: flex; align-items: center; height: 44px; padding-right: 48px; background: linear-gradient(90deg, #282828 80%, #404040); color: #aaa; font-size: 24px; }
.ready { flex: 1; padding-left: 47px; }
.view-btn { display: grid; place-items: center; width: 72px; height: 44px; }
.view-btn.on { background: #3a3a3a; }
.view-btn svg { width: 28px; height: 26px; fill: none; stroke: #a0a0a0; stroke-width: 2; }
.step { width: 16px; height: 16px; background: linear-gradient(#bbb, #bbb) center / 16px 4px no-repeat; }
.minus { margin-left: 16px; }
.plus { background: linear-gradient(#fff, #fff) center / 16px 4px no-repeat, linear-gradient(#fff, #fff) center / 4px 16px no-repeat; }
.zoom-range { width: 200px; height: 32px; margin: 0 14px; appearance: none; background: linear-gradient(#505050, #505050) center / 100% 7px no-repeat; }
.zoom-range::-webkit-slider-thumb { appearance: none; width: 32px; height: 32px; border-radius: 50%; background: #7c7c7c; }
.percent { margin-left: 34px; color: #ddd; font-size: 23px; }

/* preview window */
.preview { display: flex; inset: 57px 294px 165px 7px; background: #191919; box-shadow: 0 16px 60px 10px rgba(0, 0, 0, .6); }
.sidebar { flex: none; width: 412px; border-right: 2px solid #000; background: linear-gradient(100deg, #303030 10%, #404040 45%, #4b4b4b 80%); }
.lights { display: flex; gap: 16px; height: 105px; padding: 39px 0 0 39px; border-bottom: 2px solid #000; background: #2e2e2e; }
.light { width: 24px; height: 24px; border-radius: 50%; background: #9c9c9c; }
.light.dim { background: #757575; }
.side-title { height: 54px; padding: 11px 29px; background: #303030; color: #747474; font-size: 26px; font-weight: 600; }
.thumbs { display: flex; flex-direction: column; gap: 34px; align-items: center; }
.thumb { display: flex; flex-direction: column; gap: 4px; align-items: center; color: #eee; text-decoration: none; }
.frame { padding: 26px; border-radius: 12px; }
.frame svg { width: 304px; height: 432px; border-radius: 6px; background: #fff; overflow: hidden; font: 15px "DejaVu Sans", sans-serif; fill: #111; }
.frame .sheet5 { height: 210px; border-radius: 0 0 6px 6px; font-size: 14px; }
.cutoff .frame { padding-top: 0; }
.frame path { stroke: #bbb; stroke-width: 2; }
.frame .k { stroke: #444; }
.frame .h { font-size: 22px; font-weight: 700; }
.frame .b { font-weight: 700; }
.frame .s { font: 12px "Liberation Serif", serif; }
.frame .e { text-anchor: end; }
.selected .frame { background: rgba(255, 255, 255, .13); }
.num { min-width: 28px; height: 34px; border-radius: 6px; font-size: 23px; font-weight: 500; line-height: 34px; text-align: center; }
.selected .num { background: #707070; }

.content { display: flex; flex: 1; flex-direction: column; min-width: 0; }
.toolbar { display: flex; flex: none; gap: 20px; height: 104px; padding: 19px 24px 0 28px; border-bottom: 2px solid #000; background: #222; color: #999; font-size: 22px; }
.tool { display: flex; flex-direction: column; align-items: center; line-height: 28px; }
.tool svg, .tool .glyphs { fill: none; stroke: #a8a8a8; stroke-width: 2; color: #a8a8a8; }
.glyphs { display: flex; align-items: center; justify-content: center; height: 40px; margin-bottom: 10px; }
.view-tool { align-items: flex-start; width: 72px; padding-left: 8px; }
.view-tool .glyphs { gap: 12px; }
.doc-title { flex: 1; line-height: 22px; }
.doc-title h1 { color: #eee; font-size: 26px; font-weight: 700; line-height: 38px; }
.zoom-tool { width: 116px; }
.zoom-tool .glyphs { gap: 54px; }
.share-tool { width: 118px; }
.mark-tool { width: 104px; }
.mark-tool .glyphs { gap: 20px; }
.mark-tool .glyphs i { width: 2px; height: 28px; background: #383838; }
.rotate-tool { width: 88px; }
.markup-tool { width: 80px; }
.search { display: flex; flex: none; gap: 12px; align-items: center; width: 648px; height: 44px; padding-left: 12px; border: 2px solid #333; border-radius: 10px; color: #999; }
.search input { flex: 1; padding: 0; border: 0; outline: 0; background: none; color: #eee; font: inherit; font-size: 25px; }
.search input::placeholder { color: #666; opacity: 1; }
.viewer { flex: 1; min-height: 0; overflow: hidden; padding: 0 26px 0 28px; background: #191919; }
.page { min-height: 100%; padding: 144px 225px 0 229px; background: #fff; color: #000; font: 34px/40px "DejaVu Sans", Verdana, sans-serif; font-variant-ligatures: none; white-space: nowrap; }
.page-head { display: grid; grid-template-columns: 1018px 1fr; margin: 0 0 130px -138px; font: 27px/30px "Liberation Serif", serif; }
.page p + p, .page table { margin-top: 25px; }
.page table { width: 1404px; border-spacing: 0; }
.page th, .page td { padding: 2px 0; font-weight: 400; text-align: left; }
.page th { font-weight: 700; }
.page td:last-child { text-align: right; }
.page h3 { margin: 44px 0 46px; border-bottom: 2px solid #aaa; font-size: 51px; font-weight: 700; line-height: 58px; }

/* notification */
.notice {
  position: absolute; top: 82px; right: 33px; width: 688px; height: 220px; padding: 18px 22px 0 20px;
  border: 2px solid #5c5c5c; border-radius: 20px;
  background: linear-gradient(90deg, transparent 45%, #383838 65%), linear-gradient(#3a3a3a, #555 40%, #808080);
  box-shadow: 0 8px 30px rgba(0, 0, 0, .3);
  color: #f0f0f0; font-size: 25px; line-height: 32px; white-space: nowrap;
}
.notice-head { display: flex; gap: 10px; align-items: center; margin: 0 0 11px -4px; color: #ccc; font-size: 23px; }
.notice-head svg { width: 36px; height: 32px; }
.notice-head time { margin-left: auto; font-size: 23px; }
.notice strong { display: block; font-size: 26px; font-weight: 600; }
.from { margin: 4px 0; }

/* dock */
.dock { position: absolute; right: 55px; bottom: 10px; left: 55px; display: flex; height: 90px; padding: 0 2px 0 4px; border: 2px solid #484848; border-radius: 24px; background: #1d1d1d; }
.app { position: relative; display: flex; flex: 1; flex-direction: column; align-items: center; padding-top: 8px; }
.app svg { width: 64px; height: 64px; }
.run::after { content: ""; width: 8px; height: 8px; margin-top: 4px; border-radius: 50%; background: #aaa; }
.sep { width: 2px; height: 66px; margin: 10px 15px; background: #505050; }
.badge { position: absolute; top: 7px; left: 45px; width: 25px; height: 25px; border-radius: 50%; background: #5c5c5c; color: #eee; font-size: 15px; font-weight: 400; line-height: 25px; }
.on-grey { --cut: #999; color: #333; }
.tile-letter { fill: #fff; font: 700 24px Inter, sans-serif; text-anchor: middle; }
.tile-letter.small { font-size: 14px; }
.shield { fill: #fff; font: 700 9px Inter, sans-serif; text-anchor: middle; }
.cal-month { fill: #fff; font: 600 12px Inter, sans-serif; text-anchor: middle; }
.cal-day { fill: #333; font: 32px Inter, sans-serif; text-anchor: middle; }
.tv { fill: #fff; font: 500 23px Inter, sans-serif; text-anchor: middle; }
.prompt { fill: #fff; font: 700 15px "Liberation Mono", monospace; }
```
